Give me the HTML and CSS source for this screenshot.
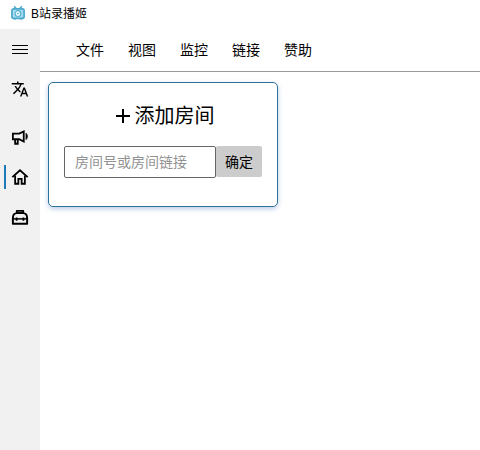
FILE: index.html
```html
<!DOCTYPE html>
<html lang="zh-CN">
<head>
  <meta charset="utf-8">
  <meta name="viewport" content="width=device-width, initial-scale=1">
  <title>B站录播姬</title>
  <link rel="stylesheet" href="styles.css">
</head>
<body>
  <header class="titlebar">
    <svg class="logo" viewBox="0 0 14 14" aria-hidden="true">
      <path d="M3.500 .8L5.200 2.600M10.500 .8L8.800 2.600" stroke="#4aa6c8" stroke-width="1.500" stroke-linecap="round"/>
      <path d="M2.500 12.800h2.500M9 12.800h2.500" stroke="#4aa9cc" stroke-width="1.600"/>
      <rect x=".9" y="2.900" width="12.200" height="9.400" rx="1.800" fill="#a9dcef" stroke="#4aa9cc" stroke-width="1.700"/>
      <circle cx="7" cy="7.600" r="2.900" fill="#f4fbfe" stroke="#55b2d4" stroke-width="1.200"/>
      <path d="M5.800 7l1.200 1.200L8.500 6.500" fill="none" stroke="#55b2d4"/>
    </svg>
    <span>B站录播姬</span>
  </header>
  <div class="shell">
    <aside class="sidebar">
      <button class="side-item" aria-label="菜单">
        <svg class="icon" viewBox="0 0 18 18"><path d="M1 5.5h16M1 9.5h16M1 13.5h16" stroke="currentColor" shape-rendering="crispEdges"/></svg>
      </button>
      <button class="side-item" aria-label="语言">
        <svg class="icon" viewBox="0 0 24 24"><path fill="currentColor" d="M12.87 15.07l-2.54-2.51.03-.03c1.74-1.94 2.98-4.17 3.71-6.53H17V4h-7V2H8v2H1v1.99h11.17C11.5 7.92 10.44 9.75 9 11.35 8.07 10.32 7.3 9.19 6.69 8h-2c.73 1.63 1.73 3.17 2.98 4.56l-5.09 5.02L4 19l5-5 3.11 3.11.76-2.04zM18.5 10h-2L12 22h2l1.12-3h4.75L21 22h2l-4.5-12zm-2.62 7l1.62-4.33L19.12 17h-3.24z"/></svg>
      </button>
      <nav class="side-nav" aria-label="页面">
        <button class="side-item" aria-label="公告">
          <svg class="icon" viewBox="0 0 24 24" fill="none" stroke="currentColor" stroke-width="2.4"><path d="M2.5 7.5H11L17 4.5V18L11 15H2.5Z"/><path d="M5.5 15V21H9V15"/><path d="M20 7C22.600 9.500 22.600 13 20 15.500Z" fill="currentColor" stroke-width="1"/></svg>
        </button>
        <button class="side-item active" aria-label="主页" aria-current="page">
          <svg class="icon" viewBox="0 0 24 24" fill="none" stroke="currentColor" stroke-width="2.4"><path d="M1.8 12.2L12 3L22.2 12.2"/><path d="M5.5 10V21H9.8V14.5H14.2V21H18.5V10"/></svg>
        </button>
        <button class="side-item" aria-label="工具箱">
          <svg class="icon" viewBox="0 0 24 24" fill="none" stroke="currentColor" stroke-width="2.4"><path d="M7.500 6.500V3.500H16.500V6.500Z" fill="#777" stroke-linejoin="round" stroke-width="2"/><path d="M2.500 21V13.500C2.500 9.500 4.500 6.800 8 6.800H16C19.500 6.800 21.500 9.500 21.500 13.500V21Z" stroke-linejoin="round" stroke-width="2.600"/><path d="M2.500 14.500H21.500" stroke-width="2"/><path d="M7.500 12.500V17M16.500 12.500V17"/></svg>
        </button>
      </nav>
    </aside>
    <div class="content">
      <nav class="menubar" aria-label="主菜单">
        <button class="menu-item">文件</button>
        <button class="menu-item">视图</button>
        <button class="menu-item">监控</button>
        <button class="menu-item">链接</button>
        <button class="menu-item">赞助</button>
      </nav>
      <main class="rooms">
        <form class="card">
          <h1 class="card-title">
            <svg class="plus" viewBox="0 0 14 14" aria-hidden="true"><path d="M7 0V14M0 7H14" stroke="currentColor" stroke-width="2"/></svg>
            <label for="room">添加房间</label>
          </h1>
          <div class="field">
            <input class="room-input" id="room" type="text" placeholder="房间号或房间链接">
            <button class="confirm" type="button">确定</button>
          </div>
        </form>
      </main>
    </div>
  </div>
</body>
</html>
```
FILE: styles.css
```css
* {
  box-sizing: border-box;
}

body {
  display: flex;
  flex-direction: column;
  min-height: 100vh;
  margin: 0;
  background: #fff;
  color: #000;
  font-family: "Liberation Sans", "Noto Sans CJK SC", sans-serif;
  font-size: 14px;
}

button,
input {
  margin: 0;
  font: inherit;
  color: inherit;
}

.titlebar {
  display: flex;
  align-items: center;
  gap: 6px;
  height: 29px;
  padding: 0 11px 4px;
  font-size: 12px;
}

.logo {
  width: 14px;
  height: 14px;
}

.shell {
  display: flex;
  flex: 1;
}

.sidebar {
  flex: none;
  width: 40px;
  background: #f1f1f1;
}

.side-nav {
  margin-top: 8px;
}

.side-item {
  display: flex;
  align-items: center;
  justify-content: center;
  position: relative;
  width: 100%;
  height: 40px;
  padding: 0;
  border: 0;
  background: none;
}

.side-item.active::before {
  content: "";
  position: absolute;
  left: 4px;
  top: 8px;
  width: 2px;
  height: 24px;
  background: #1c7ab8;
}

.icon {
  width: 18px;
  height: 18px;
}

.content {
  flex: 1;
  min-width: 0;
}

.menubar {
  display: flex;
  height: 43px;
  padding: 0 24px 2px;
  border-bottom: 1px solid #999;
}

.menu-item {
  padding: 0 12px;
  border: 0;
  background: none;
}

.rooms {
  display: flex;
  flex-wrap: wrap;
  padding: 10px 8px;
}

.card {
  width: 230px;
  padding: 17px 15px 28px;
  border: 1px solid #2b7399;
  border-radius: 5px;
  box-shadow: 0 2px 5px rgb(60 110 190 / 35%);
}

.card-title {
  display: flex;
  align-items: center;
  justify-content: center;
  gap: 5px;
  margin: 0 0 14px;
  padding-left: 4px;
  font-size: 20px;
  font-weight: 400;
  line-height: 32px;
}

.plus {
  width: 14px;
  height: 14px;
}

.field {
  display: flex;
  align-items: flex-start;
}

.room-input {
  flex: 1;
  min-width: 0;
  height: 32px;
  padding: 0 10px;
  border: 1px solid #666;
  border-radius: 2px;
  background: #fff;
}

.room-input::placeholder {
  color: #929292;
  opacity: 1;
}

.confirm {
  width: 46px;
  height: 31px;
  padding: 0 0 2px;
  border: 0;
  border-radius: 2px;
  background: #ccc;
}
```
